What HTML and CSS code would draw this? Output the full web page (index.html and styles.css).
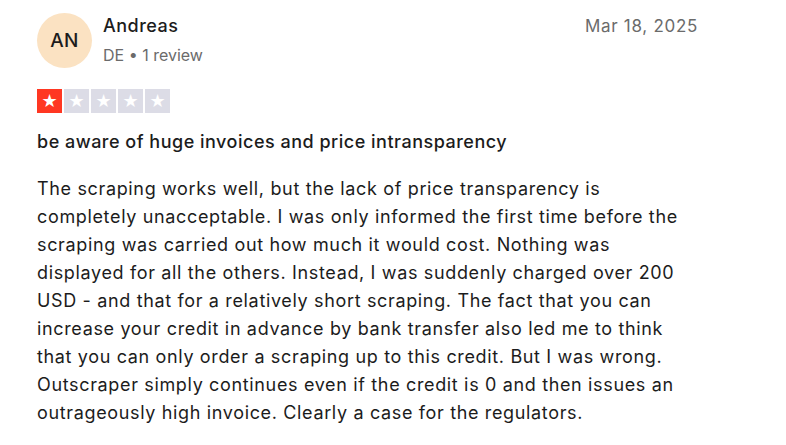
FILE: index.html
```html
<!DOCTYPE html>
<html lang="en">
<head>
    <meta charset="UTF-8">
    <title>Review</title>
    <link rel="stylesheet" href="styles.css">
</head>
<body>
    <article class="review">
        <header class="review-header">
            <div class="avatar">AN</div>
            <div class="reviewer">
                <div class="name">Andreas</div>
                <div class="meta">DE &bull; 1 review</div>
            </div>
            <time class="date">Mar 18, 2025</time>
        </header>

        <div class="stars">
            <span class="star filled">&#9733;</span>
            <span class="star">&#9733;</span>
            <span class="star">&#9733;</span>
            <span class="star">&#9733;</span>
            <span class="star">&#9733;</span>
        </div>

        <h2 class="title">be aware of huge invoices and price intransparency</h2>

        <p class="body">The scraping works well, but the lack of price transparency is completely unacceptable. I was only informed the first time before the scraping was carried out how much it would cost. Nothing was displayed for all the others. Instead, I was suddenly charged over 200 USD - and that for a relatively short scraping. The fact that you can increase your credit in advance by bank transfer also led me to think that you can only order a scraping up to this credit. But I was wrong. Outscraper simply continues even if the credit is 0 and then issues an outrageously high invoice. Clearly a case for the regulators.</p>
    </article>
</body>
</html>
```

FILE: styles.css
```css
* {
    box-sizing: border-box;
}

body {
    margin: 0;
    background: #ffffff;
    font-family: 'Inter', 'Liberation Sans', sans-serif;
    color: #1c1c1c;
}

.review {
    width: 661px;
    margin-left: 37px;
    padding-top: 13px;
}

.review-header {
    display: flex;
    align-items: flex-start;
    gap: 11px;
}

.avatar {
    width: 55px;
    height: 55px;
    border-radius: 50%;
    background: #fbe2c2;
    display: flex;
    align-items: center;
    justify-content: center;
    font-size: 19px;
    font-weight: 500;
    letter-spacing: 0.3px;
    color: #1c1c1c;
}

.reviewer {
    flex: 1;
    padding-top: 1px;
}

.name {
    font-size: 18px;
    font-weight: 500;
    line-height: 24px;
    letter-spacing: 0.5px;
}

.meta {
    margin-top: 6px;
    font-size: 16px;
    line-height: 22px;
    color: #6b6b6b;
}

.date {
    font-size: 17px;
    line-height: 24px;
    letter-spacing: 0.7px;
    color: #6b6b6b;
    padding-top: 1px;
}

.stars {
    display: flex;
    gap: 2px;
    margin-top: 21px;
}

.star {
    width: 25px;
    height: 24px;
    background: #dcdce6;
    color: #ffffff;
    font-family: 'DejaVu Sans', sans-serif;
    font-size: 18px;
    line-height: 24px;
    text-align: center;
}

.star.filled {
    background: #ff3722;
}

.title {
    margin: 16px 0 0;
    font-size: 18px;
    font-weight: 500;
    line-height: 26px;
    letter-spacing: 0.5px;
}

.body {
    margin: 20px 0 0;
    font-size: 18px;
    line-height: 28px;
    letter-spacing: 0.65px;
}
```
